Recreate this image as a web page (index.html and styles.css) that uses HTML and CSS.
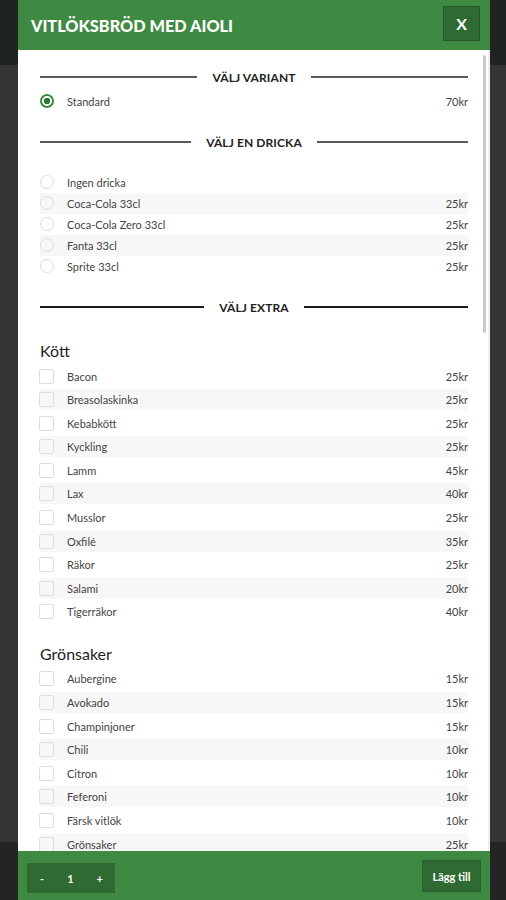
FILE: index.html
```html
<!DOCTYPE html>
<html lang="sv">
<head>
<meta charset="utf-8">
<title>Vitlöksbröd med aioli</title>
<link rel="stylesheet" href="styles.css">
</head>
<body>
<div class="page">
  <div class="topbar"></div>
  <div class="pagebody"></div>
  <div class="bottombar"></div>
</div>

<div class="modal">
  <div class="modal-header">
    <h1 class="modal-title">VITLÖKSBRÖD MED AIOLI</h1>
    <button class="close-btn">X</button>
  </div>

  <div class="modal-body">
    <div class="scroll-thumb"></div>

    <div class="section-title sec-variant"><span>VÄLJ VARIANT</span></div>
    <div class="list list-variant">
      <div class="row"><span class="radio checked"></span><span class="label">Standard</span><span class="price">70kr</span></div>
    </div>

    <div class="section-title sec-drink"><span>VÄLJ EN DRICKA</span></div>
    <div class="list list-drink">
      <div class="row"><span class="radio"></span><span class="label">Ingen dricka</span><span class="price"></span></div>
      <div class="row"><span class="radio"></span><span class="label">Coca-Cola 33cl</span><span class="price">25kr</span></div>
      <div class="row"><span class="radio"></span><span class="label">Coca-Cola Zero 33cl</span><span class="price">25kr</span></div>
      <div class="row"><span class="radio"></span><span class="label">Fanta 33cl</span><span class="price">25kr</span></div>
      <div class="row"><span class="radio"></span><span class="label">Sprite 33cl</span><span class="price">25kr</span></div>
    </div>

    <div class="section-title sec-extra dark"><span>VÄLJ EXTRA</span></div>

    <h2 class="cat cat-first">Kött</h2>
    <div class="list list-extra">
      <div class="row"><span class="check"></span><span class="label">Bacon</span><span class="price">25kr</span></div>
      <div class="row"><span class="check"></span><span class="label">Breasolaskinka</span><span class="price">25kr</span></div>
      <div class="row"><span class="check"></span><span class="label">Kebabkött</span><span class="price">25kr</span></div>
      <div class="row"><span class="check"></span><span class="label">Kyckling</span><span class="price">25kr</span></div>
      <div class="row"><span class="check"></span><span class="label">Lamm</span><span class="price">45kr</span></div>
      <div class="row"><span class="check"></span><span class="label">Lax</span><span class="price">40kr</span></div>
      <div class="row"><span class="check"></span><span class="label">Musslor</span><span class="price">25kr</span></div>
      <div class="row"><span class="check"></span><span class="label">Oxfilé</span><span class="price">35kr</span></div>
      <div class="row"><span class="check"></span><span class="label">Räkor</span><span class="price">25kr</span></div>
      <div class="row"><span class="check"></span><span class="label">Salami</span><span class="price">20kr</span></div>
      <div class="row"><span class="check"></span><span class="label">Tigerräkor</span><span class="price">40kr</span></div>
    </div>

    <h2 class="cat">Grönsaker</h2>
    <div class="list list-extra">
      <div class="row"><span class="check"></span><span class="label">Aubergine</span><span class="price">15kr</span></div>
      <div class="row"><span class="check"></span><span class="label">Avokado</span><span class="price">15kr</span></div>
      <div class="row"><span class="check"></span><span class="label">Champinjoner</span><span class="price">15kr</span></div>
      <div class="row"><span class="check"></span><span class="label">Chili</span><span class="price">10kr</span></div>
      <div class="row"><span class="check"></span><span class="label">Citron</span><span class="price">10kr</span></div>
      <div class="row"><span class="check"></span><span class="label">Feferoni</span><span class="price">10kr</span></div>
      <div class="row"><span class="check"></span><span class="label">Färsk vitlök</span><span class="price">10kr</span></div>
      <div class="row"><span class="check"></span><span class="label">Grönsaker</span><span class="price">25kr</span></div>
    </div>
  </div>

  <div class="modal-footer">
    <div class="stepper">
      <span class="step-btn">-</span>
      <span class="step-val">1</span>
      <span class="step-btn">+</span>
    </div>
    <button class="add-btn">Lägg till</button>
  </div>
</div>
</body>
</html>
```

FILE: styles.css
```css
html, body {
  margin: 0;
  padding: 0;
}

body {
  width: 506px;
  height: 900px;
  overflow: hidden;
  background: #343434;
  font-family: Lato, "Open Sans", sans-serif;
  position: relative;
}

.page {
  display: flex;
  flex-direction: column;
  height: 900px;
}

.topbar {
  height: 65px;
  background: #202421;
}

.pagebody {
  flex: 1;
  background: #343434;
}

.bottombar {
  height: 58px;
  background: #222523;
}

.modal {
  position: absolute;
  left: 18px;
  top: 0;
  width: 472px;
  height: 900px;
  display: flex;
  flex-direction: column;
  background: #fff;
}

.modal-header {
  height: 50px;
  flex: none;
  background: #3e8a42;
  display: flex;
  align-items: center;
  justify-content: space-between;
  padding: 0 10px 0 13px;
  box-sizing: border-box;
}

.modal-title {
  margin: 0;
  color: #fff;
  font-size: 16.3px;
  font-weight: 900;
  letter-spacing: 0;
  line-height: 1;
  padding-top: 2px;
}

.close-btn {
  width: 37px;
  height: 35px;
  margin-top: -3px;
  background: #2e6a31;
  border: 1px solid #26572a;
  color: #fff;
  font-family: Lato, sans-serif;
  font-weight: 700;
  font-size: 16px;
  padding: 0;
}

.modal-body {
  flex: 1;
  position: relative;
  overflow: hidden;
  padding: 17px 20px 0 22px;
  border-right: 2px solid #efefef;
}

.scroll-thumb {
  position: absolute;
  right: 2px;
  top: 5px;
  width: 3px;
  height: 278px;
  background: #c9c9c9;
  border-radius: 2px;
}

.section-title {
  display: flex;
  align-items: center;
  gap: 15px;
  height: 20px;
  color: #222;
  font-size: 12px;
  font-weight: 700;
  letter-spacing: 0.1px;
}

.section-title::before,
.section-title::after {
  content: "";
  flex: 1;
  height: 2px;
  background: #5a5a5a;
}

.section-title.dark::before,
.section-title.dark::after {
  background: #1a1a1a;
}

.sec-drink {
  margin-top: 20.5px;
}

.sec-extra {
  margin-top: 20.5px;
}

.list-variant {
  margin-top: 3.5px;
}

.list-drink {
  margin-top: 19.5px;
}

.list {
  display: flex;
  flex-direction: column;
}

.list-extra {
  gap: 2.6px;
  margin-top: 2.5px;
}

.row {
  height: 21px;
  display: flex;
  align-items: center;
  font-size: 11px;
  color: #444;
}

.list-drink .row:nth-child(even),
.list-extra .row:nth-child(even) {
  background: #f7f7f7;
}

.label {
  flex: 1;
  padding-left: 13px;
}

.price {
  text-align: right;
}

.radio {
  width: 14px;
  height: 14px;
  box-sizing: border-box;
  border: 1px solid #dcdcdc;
  border-radius: 50%;
  flex: none;
}

.radio.checked {
  border: 2px solid #3e8a42;
  background: radial-gradient(circle, #2f7a33 0 3px, #fff 3.5px);
}

.check {
  width: 15px;
  height: 15px;
  box-sizing: border-box;
  border: 1px solid #dedede;
  border-radius: 2px;
  flex: none;
  margin-left: -1px;
  margin-right: 0;
}

.cat {
  margin: 19.5px 0 0 0;
  font-size: 16px;
  font-weight: 400;
  line-height: 24px;
  color: #222;
}

.cat-first {
  margin-top: 22px;
}

.modal-footer {
  height: 49px;
  flex: none;
  background: #3e8a42;
  display: flex;
  align-items: center;
  justify-content: space-between;
  padding: 0 9px;
  box-sizing: border-box;
}

.stepper {
  width: 88px;
  height: 30px;
  margin-top: 5px;
  background: #2e6a31;
  display: flex;
  align-items: center;
  justify-content: space-between;
  padding: 0 12px 0 13px;
  box-sizing: border-box;
  color: #fff;
  font-size: 11px;
  font-weight: 700;
}

.add-btn {
  width: 59px;
  height: 32px;
  margin-top: 1px;
  background: #2e6a31;
  border: 1px solid #2a6030;
  color: #fff;
  font-family: Lato, sans-serif;
  font-size: 11px;
  font-weight: 700;
  padding: 0;
}
```
